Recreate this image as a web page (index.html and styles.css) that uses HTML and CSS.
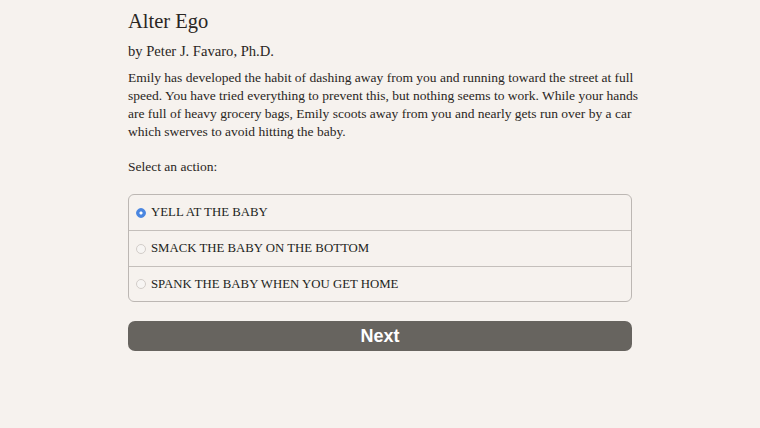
FILE: index.html
```html
<!DOCTYPE html>
<html lang="en">
<head>
<meta charset="utf-8">
<title>Alter Ego</title>
<link rel="stylesheet" href="styles.css">
</head>
<body>
<main class="page">
  <h1 class="title">Alter Ego</h1>
  <p class="byline">by Peter J. Favaro, Ph.D.</p>
  <p class="story">Emily has developed the habit of dashing away from you and running toward the street at full speed. You have tried everything to prevent this, but nothing seems to work. While your hands are full of heavy grocery bags, Emily scoots away from you and nearly gets run over by a car which swerves to avoid hitting the baby.</p>
  <p class="prompt">Select an action:</p>
  <div class="options">
    <label class="option"><span class="radio checked"></span><span class="opt-text">YELL AT THE BABY</span></label>
    <label class="option"><span class="radio"></span><span class="opt-text">SMACK THE BABY ON THE BOTTOM</span></label>
    <label class="option"><span class="radio"></span><span class="opt-text">SPANK THE BABY WHEN YOU GET HOME</span></label>
  </div>
  <button class="next">Next</button>
</main>
</body>
</html>
```
FILE: styles.css
```css
html, body {
  margin: 0;
  padding: 0;
  background: #f6f2ee;
}
body {
  font-family: "Liberation Serif", "Times New Roman", serif;
  color: #2a2623;
}
.page {
  width: 504px;
  margin: 0 0 0 128px;
  padding-top: 8px;
}
.title {
  margin: 0;
  font-weight: normal;
  font-size: 20.5px;
  line-height: 26px;
}
.byline {
  margin: 7px 0 0 0;
  font-size: 14.6px;
  line-height: 20px;
}
.story {
  margin: 8px -16px 0 0;
  font-size: 13.5px;
  line-height: 18px;
}
.prompt {
  margin: 17px 0 0 0;
  font-size: 13.5px;
  line-height: 18px;
}
.options {
  margin-top: 18px;
  border: 1px solid #bcb7b3;
  border-radius: 6px;
  display: flex;
  flex-direction: column;
}
.option {
  display: flex;
  align-items: center;
  height: 36px;
  padding: 0 0 0 7px;
  box-sizing: border-box;
  gap: 5px;
  font-size: 12.8px;
  color: #221e1b;
  border-top: 1px solid #c4bfbb;
}
.option:first-child {
  border-top: none;
  height: 35px;
}
.option:last-child {
  height: 35px;
}
.radio {
  width: 10px;
  height: 10px;
  border-radius: 50%;
  background: #f7f5f3;
  border: 1px solid #d2cdc9;
  box-sizing: border-box;
  flex: none;
}
.radio.checked {
  border: 1px solid #4f8ae2;
  background: radial-gradient(circle, #ffffff 0 1.3px, #4a86e0 1.8px);
}
.next {
  display: block;
  width: 100%;
  margin-top: 19px;
  height: 30px;
  border: none;
  border-radius: 7px;
  background: #67645f;
  color: #ffffff;
  font-family: "Liberation Sans", Arial, sans-serif;
  font-weight: bold;
  font-size: 18px;
  line-height: 31px;
  padding: 0;
}
```
